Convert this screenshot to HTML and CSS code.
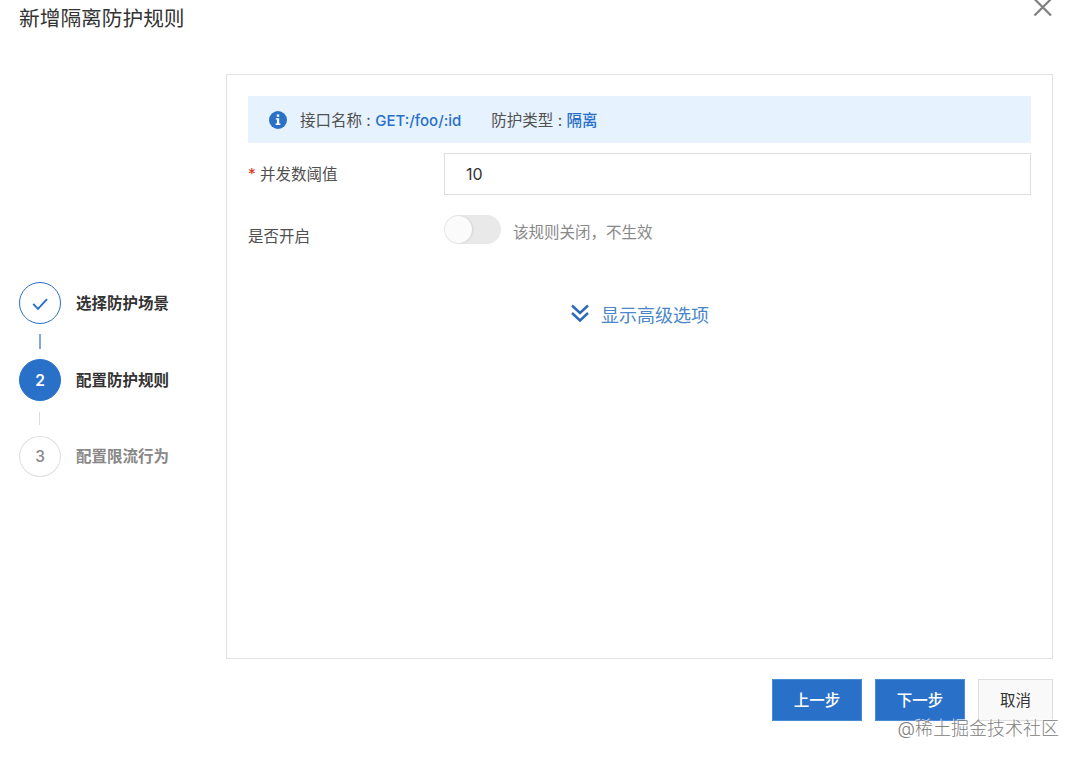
FILE: index.html
```
<!DOCTYPE html>
<html lang="zh-CN">

<head>
    <meta charset="UTF-8">
    <title>新增隔离防护规则</title>
    <link rel="stylesheet" href="styles.css">
</head>

<body>
    <div class="dialog">
        <div class="header">
            <h1>新增隔离防护规则</h1>
            <svg class="close" width="20" height="20" viewBox="0 0 20 20">
                <path d="M1.5 1L18 17.5M18 1L1.5 17.5" />
            </svg>
        </div>

        <div class="main">
            <ul class="steps">
                <li class="step done">
                    <span class="circle">
                        <svg width="16" height="14" viewBox="0 0 16 14">
                            <path d="M1.2 6.8L6 11.8L15 2.2" />
                        </svg>
                    </span>
                    <span class="text">选择防护场景</span>
                </li>
                <li class="line active"></li>
                <li class="step current">
                    <span class="circle">2</span>
                    <span class="text">配置防护规则</span>
                </li>
                <li class="line"></li>
                <li class="step wait">
                    <span class="circle">3</span>
                    <span class="text">配置限流行为</span>
                </li>
            </ul>

            <div class="panel">
                <div class="notice">
                    <svg class="info" width="18" height="18" viewBox="0 0 18 18">
                        <circle cx="9" cy="9" r="9" />
                        <path d="M7.8 3.6h2.4v2.1H7.8zM6.7 7.2h3.5v5.4h1.2v1.3H6.6v-1.3h1.3V8.5H6.7z" />
                    </svg>
                    <span class="name">接口名称 : <b>GET:/foo/:id</b></span>
                    <span class="type">防护类型 : <b>隔离</b></span>
                </div>

                <div class="row">
                    <label for="count"><i>*</i>并发数阈值</label>
                    <input type="text" id="count" value="10">
                </div>

                <div class="row open">
                    <label>是否开启</label>
                    <span class="switch"></span>
                    <span class="tip">该规则关闭，不生效</span>
                </div>

                <div class="more">
                    <svg width="20" height="20" viewBox="0 0 20 20">
                        <path d="M2 2.5L10 10L18 2.5M2 10L10 17.5L18 10" />
                    </svg>
                    <span>显示高级选项</span>
                </div>
            </div>
        </div>

        <div class="footer">
            <button class="btn primary">上一步</button>
            <button class="btn primary">下一步</button>
            <button class="btn cancel">取消</button>
        </div>
        <div class="mark">@稀土掘金技术社区</div>
    </div>
</body>

</html>
```
FILE: styles.css
```
* {
    margin: 0;
    padding: 0;
    box-sizing: border-box;
}

body {
    background: #fff;
    font-family: Inter, "Noto Sans CJK SC", sans-serif;
    font-size: 15.5px;
    color: #505050;
    overflow: hidden;
}

svg {
    display: block;
    fill: none;
}

.dialog {
    position: relative;
    width: 1080px;
    height: 760px;
    padding: 0 27px 0 19px;
}

.header {
    display: flex;
    justify-content: space-between;
    height: 74px;
}

.header h1 {
    height: 38px;
    line-height: 38px;
    font-size: 20.7px;
    font-weight: 400;
    color: #333;
}

.close {
    margin-top: -2px;
    stroke: #808080;
    stroke-width: 2.2;
}

.main {
    display: flex;
    height: 585px;
}

.steps {
    width: 207px;
    padding-top: 208px;
    list-style: none;
}

.step {
    display: flex;
    align-items: center;
    height: 42px;
    font-weight: 700;
    color: #333;
}

.step .text {
    padding-bottom: 3px;
}

.circle {
    display: flex;
    align-items: center;
    justify-content: center;
    width: 42px;
    height: 42px;
    margin-right: 15px;
    border: 1px solid #ddd;
    border-radius: 50%;
    font-weight: 500;
}

.done .circle {
    border-color: #2970c8;
}

.done svg {
    margin-top: 2px;
    stroke: #2970c8;
    stroke-width: 1.9;
}

.current .circle {
    border-color: #2970c8;
    background: #2970c8;
    font-weight: 600;
    color: #fff;
}

.wait {
    height: 41px;
    color: #888;
}

.wait .circle {
    height: 41px;
}

.line {
    width: 1px;
    height: 13px;
    margin: 11px 0 11px 20px;
    background: #ddd;
}

.line.active {
    width: 2px;
    height: 15px;
    margin: 10px 0 10px 20px;
    background: #7fa8d9;
}

.panel {
    flex: 1;
    padding: 21px;
    border: 1px solid #e2e2e2;
}

.notice {
    display: flex;
    align-items: center;
    height: 47px;
    padding-left: 21px;
    background: #e6f2fe;
}

.notice span {
    padding-bottom: 2px;
}

.notice b {
    font-weight: 500;
    color: #2970c8;
}

.notice .name {
    margin: 0 30px 0 13px;
}

.name b {
    font-size: 15px;
}

.info circle {
    fill: #2970c8;
}

.info path {
    fill: #fff;
}

.row {
    display: flex;
    align-items: center;
    height: 42px;
    margin-top: 10px;
}

.row label {
    width: 196px;
    padding-bottom: 2px;
}

.row i {
    display: inline-block;
    width: 12px;
    font-style: normal;
    color: #d93026;
}

.row input {
    flex: 1;
    height: 42px;
    padding-left: 21px;
    border: 1px solid #dedede;
    outline: none;
    font: inherit;
    font-size: 16px;
    color: #333;
}

.row.open {
    height: 30px;
    margin-top: 19px;
}

.open label {
    padding-top: 14px;
}

.switch {
    width: 57px;
    height: 29px;
    border-radius: 15px;
    background: #e9e9e9;
}

.switch::before {
    content: "";
    display: block;
    width: 27px;
    height: 27px;
    margin: 1px;
    border-radius: 50%;
    background: #fbfbfb;
    box-shadow: 1px 0 2px rgba(0, 0, 0, .1);
}

.tip {
    margin-left: 12px;
    padding-top: 3px;
    color: #888;
}

.more {
    display: flex;
    align-items: center;
    justify-content: center;
    height: 30px;
    margin-top: 54px;
    font-size: 18px;
    color: #4a86c8;
}

.more span {
    padding-top: 1px;
}

.more svg {
    margin-right: 11px;
    stroke: #2f68ba;
    stroke-width: 2.4;
}

.footer {
    display: flex;
    justify-content: flex-end;
    margin-top: 20px;
}

.btn {
    width: 90px;
    height: 42px;
    margin-left: 13px;
    padding-bottom: 2px;
    border: 1px solid #4c8bd8;
    background: #2970c8;
    font: inherit;
    font-weight: 500;
    color: #fff;
}

.cancel {
    width: 75px;
    border-color: #dedede;
    background: #f9f9f9;
    font-weight: 400;
    color: #333;
}

/* 水印压在按钮上面 */
.mark {
    position: absolute;
    right: 21px;
    bottom: 18px;
    line-height: 26px;
    font-size: 18px;
    font-weight: 300;
    color: #808080;
    text-shadow: -1px -1px 0 rgba(255, 255, 255, .8);
}
```
